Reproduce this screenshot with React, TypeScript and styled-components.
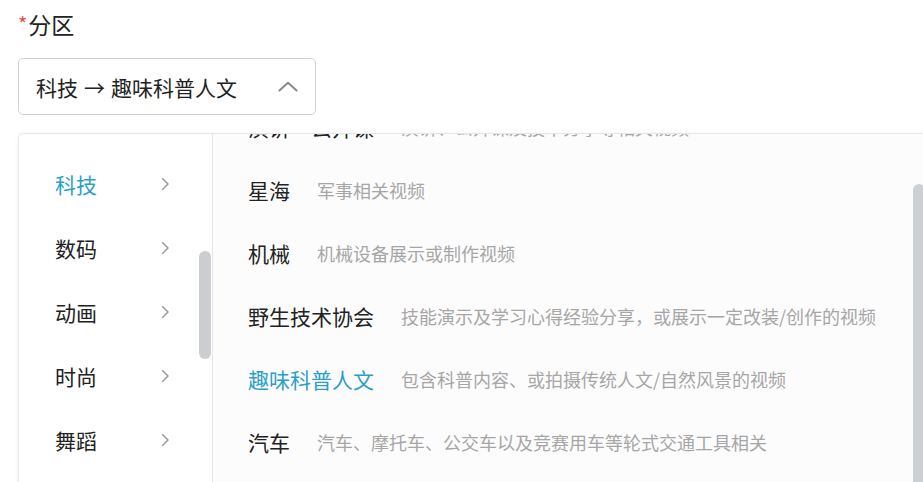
import { useLayoutEffect, useRef } from 'react';
import styled, { createGlobalStyle, css } from 'styled-components';

const GlobalStyle = createGlobalStyle`
  html, body {
    margin: 0;
    padding: 0;
    background: #fff;
    overflow: hidden;
  }
  body {
    font-family: "Noto Sans CJK SC", "Noto Sans", sans-serif;
    color: #222;
  }
`;

const accent = '#2a9fc9';

const Page = styled.div`
  padding-left: 18px;
  width: 920px;
`;

const Label = styled.div`
  margin-top: 8px;
  height: 32px;
  line-height: 32px;
  font-size: 23px;
  color: #222;
`;

const Required = styled.span`
  color: #e0504f;
  font-size: 20px;
  vertical-align: top;
  margin-right: 1px;
`;

const Select = styled.div`
  box-sizing: border-box;
  margin-top: 18px;
  width: 298px;
  height: 57px;
  border: 1px solid #d2d2d2;
  border-radius: 5px;
  display: flex;
  align-items: center;
  padding: 0 17px 0 17px;
  font-size: 21px;
  color: #222;
`;

const SelectValue = styled.span`
  flex: 1;
  white-space: nowrap;
`;

const Arrow = styled.span`
  margin: 0 6px;
`;

const Panel = styled.div`
  margin-top: 18px;
  width: 920px;
  height: 360px;
  display: flex;
  border-top: 1px solid #e6e6e6;
  border-left: 1px solid #e6e6e6;
  border-top-left-radius: 5px;
  box-shadow: 0 1px 6px rgba(0, 0, 0, 0.05);
  overflow: hidden;
`;

const Categories = styled.div`
  position: relative;
  box-sizing: border-box;
  width: 194px;
  flex-shrink: 0;
  padding-top: 18px;
  border-right: 1px solid #e6e6e6;
`;

const Category = styled.div<{ $active?: boolean }>`
  height: 64px;
  display: flex;
  align-items: center;
  padding: 0 40px 0 36px;
  font-size: 21px;
  color: #222;
  cursor: pointer;

  ${props =>
    props.$active &&
    css`
      color: ${accent};
    `}
`;

const CategoryName = styled.span`
  flex: 1;
`;

const Thumb = styled.div<{ $tone: string }>`
  position: absolute;
  width: 12px;
  border-radius: 6px;
  background: ${props => props.$tone};
`;

const SubArea = styled.div`
  position: relative;
  flex: 1;
  background: #fdfcfd;
`;

const SubList = styled.div`
  height: 100%;
  overflow: hidden;
  padding-left: 35px;
  box-sizing: border-box;
`;

const SubItem = styled.div<{ $active?: boolean }>`
  height: 63px;
  display: flex;
  align-items: center;
  gap: 27px;
  white-space: nowrap;
  cursor: pointer;
  color: ${props => (props.$active ? accent : '#222')};
`;

const SubName = styled.span`
  font-size: 21px;
`;

const SubDesc = styled.span`
  font-size: 18px;
  color: #a6a6a6;
`;

const Chevron = ({ dir, size = 14, color = '#9a9a9a' }: { dir: 'up' | 'right'; size?: number; color?: string }) => (
  <svg width={size} height={size} viewBox="0 0 14 14" fill="none">
    {dir === 'right' ? (
      <path d="M4.5 1.5 L10 7 L4.5 12.5" stroke={color} strokeWidth="1.5" strokeLinecap="round" strokeLinejoin="round" />
    ) : (
      <path d="M1 9.5 L7 4 L13 9.5" stroke={color} strokeWidth="1.4" strokeLinecap="round" strokeLinejoin="round" />
    )}
  </svg>
);

const categories = ['科技', '数码', '动画', '时尚', '舞蹈', '音乐'];

const subs = [
  { name: '演讲·公开课', desc: '演讲、公开课及技术分享等相关视频' },
  { name: '星海', desc: '军事相关视频' },
  { name: '机械', desc: '机械设备展示或制作视频' },
  { name: '野生技术协会', desc: '技能演示及学习心得经验分享，或展示一定改装/创作的视频' },
  { name: '趣味科普人文', desc: '包含科普内容、或拍摄传统人文/自然风景的视频' },
  { name: '汽车', desc: '汽车、摩托车、公交车以及竞赛用车等轮式交通工具相关' },
  { name: '数码', desc: '数码产品评测与开箱相关视频' },
];

export default function App() {
  const listRef = useRef<HTMLDivElement>(null);

  useLayoutEffect(() => {
    if (listRef.current) listRef.current.scrollTop = 39;
  }, []);

  return (
    <Page>
      <GlobalStyle />
      <Label>
        <Required>*</Required>分区
      </Label>
      <Select>
        <SelectValue>
          科技<Arrow>→</Arrow>趣味科普人文
        </SelectValue>
        <Chevron dir="up" size={20} color="#8a8a8a" />
      </Select>
      <Panel>
        <Categories>
          {categories.map((name, i) => (
            <Category key={name} $active={i === 0}>
              <CategoryName>{name}</CategoryName>
              <Chevron dir="right" size={14} />
            </Category>
          ))}
          <Thumb $tone="#cbcdd1" style={{ left: 180, top: 117, height: 108 }} />
        </Categories>
        <SubArea>
          <SubList ref={listRef}>
            {subs.map(s => (
              <SubItem key={s.name} $active={s.name === '趣味科普人文'}>
                <SubName>{s.name}</SubName>
                <SubDesc>{s.desc}</SubDesc>
              </SubItem>
            ))}
          </SubList>
          <Thumb $tone="#cdd0d3" style={{ left: 700, top: 50, height: 420 }} />
        </SubArea>
      </Panel>
    </Page>
  );
}
